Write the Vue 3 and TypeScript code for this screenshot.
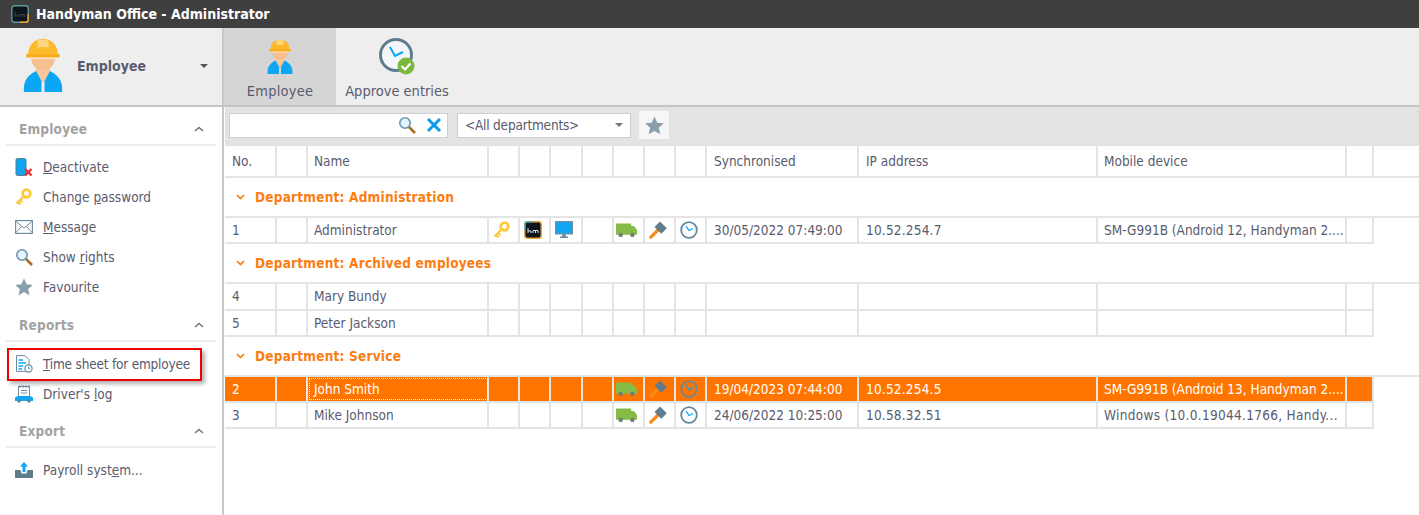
<script setup lang="ts">
type Item = { pre: string; key: string; post: string; icon: string; mark?: boolean }
type Section = { title: string; items: Item[] }
type Row = { no: string; name: string; icons: string[]; sync: string; ip: string; device: string; sel?: boolean; wide?: boolean }
type Group = { title: string; rows: Row[] }

const sections: Section[] = [
  {
    title: 'Employee',
    items: [
      { pre: '', key: 'D', post: 'eactivate', icon: 'deactivate' },
      { pre: 'Change ', key: 'p', post: 'assword', icon: 'key' },
      { pre: '', key: 'M', post: 'essage', icon: 'mail' },
      { pre: 'Show ', key: 'r', post: 'ights', icon: 'search' },
      { pre: 'Favourite', key: '', post: '', icon: 'star' },
    ],
  },
  {
    title: 'Reports',
    items: [
      { pre: '', key: 'T', post: 'ime sheet for employee', icon: 'sheet', mark: true },
      { pre: "Driver's ", key: 'l', post: 'og', icon: 'log' },
    ],
  },
  { title: 'Export', items: [{ pre: 'Payroll syst', key: 'e', post: 'm...', icon: 'upload' }] },
]

const headers = ['No.', '', 'Name', '', '', '', '', '', '', '', 'Synchronised', 'IP address', 'Mobile device', '']

const blank = ['', '', '', '', '', '', '']
const groups: Group[] = [
  {
    title: 'Department: Administration',
    rows: [
      {
        no: '1', name: 'Administrator', icons: ['key', 'hm', 'monitor', '', 'truck', 'hammer', 'clock'],
        sync: '30/05/2022 07:49:00', ip: '10.52.254.7', device: 'SM-G991B (Android 12, Handyman 2....',
      },
    ],
  },
  {
    title: 'Department: Archived employees',
    rows: [
      { no: '4', name: 'Mary Bundy', icons: blank, sync: '', ip: '', device: '' },
      { no: '5', name: 'Peter Jackson', icons: blank, sync: '', ip: '', device: '' },
    ],
  },
  {
    title: 'Department: Service',
    rows: [
      {
        no: '2', name: 'John Smith', icons: ['', '', '', '', 'truck', 'hammer', 'clock'],
        sync: '19/04/2023 07:44:00', ip: '10.52.254.5', device: 'SM-G991B (Android 13, Handyman 2....', sel: true,
      },
      {
        no: '3', name: 'Mike Johnson', icons: ['', '', '', '', 'truck', 'hammer', 'clock'],
        sync: '24/06/2022 10:25:00', ip: '10.58.32.51', device: 'Windows (10.0.19044.1766, Handy...', wide: true,
      },
    ],
  },
]
</script>

<template>
  <div class="app">
    <svg class="defs" aria-hidden="true">
      <defs>
        <symbol id="i-worker" viewBox="0 0 40 54">
          <path d="M13 30H27V35L20 45L13 35Z" fill="#f7c79b" />
          <path d="M1 54C0 45 3 38 13 33L18.5 43V54Z" fill="#0ba6f4" />
          <path d="M39 54C40 45 37 38 27 33L21.5 43V54Z" fill="#0ba6f4" />
          <path d="M8 18H32C32 27 27 32 20 32S8 27 8 18Z" fill="#f6c08e" />
          <path d="M5 18C5 7 11 1 20 1S35 7 35 18Z" fill="#fcb92b" />
          <path d="M14.5 2H25.5V10C23 8.5 17 8.5 14.5 10Z" fill="#fdd77f" />
          <rect x="3" y="16" width="34" height="3.5" rx="1.7" fill="#f9ae1f" />
          <rect x="7" y="19.5" width="26" height="1.6" fill="#fde3c4" />
        </symbol>
        <symbol id="i-approve" viewBox="0 0 38 38">
          <circle cx="18" cy="17" r="15.5" fill="#f4f7f9" stroke="#5d7d8d" stroke-width="3" />
          <path d="M12 9L17 18L25 14" fill="none" stroke="#0ba6f4" stroke-width="2" />
          <circle cx="28" cy="28" r="8.5" fill="#7cb83e" />
          <path d="M23.5 28L27 31.5L32.5 25.5" fill="none" stroke="#fff" stroke-width="2.2" />
        </symbol>
        <symbol id="i-deactivate" viewBox="0 0 18 18">
          <rect x="1" y=".5" width="10" height="17" rx="1.5" fill="#0ba6f4" stroke="#5d7d8d" stroke-width="1" />
          <path d="M10 11L16.5 17.5M16.5 11L10 17.5" stroke="#e8303a" stroke-width="2.4" />
        </symbol>
        <symbol id="i-key" viewBox="0 0 18 18">
          <path d="M1.5 15.5L8 9M3 14L5.5 16.5M5 12L7.3 14.3" stroke="#fdc83a" stroke-width="2.2" fill="none" />
          <circle cx="11.5" cy="5.5" r="3.8" fill="none" stroke="#fdc83a" stroke-width="2.8" />
        </symbol>
        <symbol id="i-mail" viewBox="0 0 18 14">
          <rect x=".6" y=".6" width="16.8" height="12.8" fill="#fff" stroke="#6f8e9d" stroke-width="1.2" />
          <path d="M1 1.5L9 8L17 1.5M1 12.5L6.5 6.5M17 12.5L11.5 6.5" fill="none" stroke="#6f8e9d" />
        </symbol>
        <symbol id="i-search" viewBox="0 0 18 18">
          <circle cx="7" cy="7" r="5.2" fill="#e4f4fc" stroke="#6e98ab" stroke-width="1.6" />
          <path d="M11 11L17 17" stroke="#b06a28" stroke-width="2.6" />
        </symbol>
        <symbol id="i-star" viewBox="0 0 18 18">
          <path d="M9 .5L11.6 6.3L17.8 6.9L13.1 11.1L14.5 17.4L9 14.1L3.5 17.4L4.9 11.1L.2 6.9L6.4 6.3Z" fill="#8a9fac" />
        </symbol>
        <symbol id="i-sheet" viewBox="0 0 18 18">
          <path d="M1.5 .6H10L14 4.6V16.4H1.5Z" fill="#fff" stroke="#6f8e9d" />
          <path d="M3.5 5H8M3.5 8H11M3.5 11H8M3.5 14H7" stroke="#0ba6f4" stroke-width="1.3" />
          <circle cx="13.5" cy="13.5" r="3.6" fill="#fff" stroke="#6f8e9d" stroke-width="1.2" />
          <path d="M13.5 11.5V13.5H15" fill="none" stroke="#0ba6f4" />
        </symbol>
        <symbol id="i-log" viewBox="0 0 18 18">
          <rect x="3.5" y="1.5" width="11" height="10" fill="#fff" stroke="#6f8e9d" />
          <path d="M5 0V3M8 0V3M11 0V3M14 0V3M6 5.5H12M6 8H12" stroke="#6f8e9d" />
          <path d="M0 16V12.5L3 11H15L18 12.5V16Z" fill="#0ba6f4" />
          <circle cx="4" cy="16" r="1.7" fill="#5d7d8d" />
          <circle cx="14" cy="16" r="1.7" fill="#5d7d8d" />
        </symbol>
        <symbol id="i-upload" viewBox="0 0 18 16">
          <path d="M9 0L13 4.5H10.5V10H7.5V4.5H5Z" fill="#0ba6f4" />
          <path d="M0 8H5.5L6.5 11.5H11.5L12.5 8H18V16H0Z" fill="#5d7d8d" />
        </symbol>
        <symbol id="i-logo" viewBox="0 0 18 18">
          <rect x=".8" y=".8" width="16.4" height="16.4" rx="2.5" fill="#10141f" stroke="#5a9a9a" stroke-width="1.4" />
          <path d="M17.2 9V14.7A2.5 2.5 0 0 1 14.7 17.2H9" fill="none" stroke="#e6a62c" stroke-width="1.4" />
          <path d="M4 7V12M4 10H7V12M9 12V9.5H14V12M11.5 9.5V12" fill="none" stroke="#3c4048" stroke-width="1" />
        </symbol>
        <symbol id="i-hm" viewBox="0 0 18 18">
          <rect x=".8" y=".8" width="16.4" height="16.4" rx="2.5" fill="#10141f" stroke="#e6a62c" stroke-width="1.4" />
          <path d="M.8 9V3.3A2.5 2.5 0 0 1 3.3 .8H9" fill="none" stroke="#5ab0b0" stroke-width="1.4" />
          <path d="M4 7V12M4 10H7V12M9 12V9.5H14V12M11.5 9.5V12" fill="none" stroke="#d8dde0" stroke-width="1" />
        </symbol>
        <symbol id="i-monitor" viewBox="0 0 18 18">
          <rect x=".6" y=".6" width="16.8" height="12.3" fill="#12a6f3" stroke="#6f8e9d" stroke-width="1.2" />
          <path d="M7.5 13H10.5L11 15.5H13V17H5V15.5H7Z" fill="#6f8e9d" />
        </symbol>
        <symbol id="i-truck" viewBox="0 0 18 13">
          <path d="M0 1H13V3H15.5L18 6.5V10.5H0Z" fill="#85bb47" />
          <circle cx="4" cy="10.7" r="1.9" fill="#6e7f77" />
          <circle cx="14" cy="10.7" r="1.9" fill="#6e7f77" />
        </symbol>
        <symbol id="i-hammer" viewBox="0 0 18 18">
          <path d="M1.8 16.2L10 8" stroke="#fb8a1d" stroke-width="3.2" stroke-linecap="round" />
          <path d="M5.5 6L11 .5L17.8 7.3L12.3 12.8Z" fill="#5f7d8d" />
        </symbol>
        <symbol id="i-clock" viewBox="0 0 18 18">
          <circle cx="9" cy="9" r="7.8" fill="#fff" stroke="#64899a" stroke-width="1.8" />
          <path d="M6 5L9 9.5L13 7.5" fill="none" stroke="#0ba6f4" stroke-width="1.3" />
        </symbol>
        <symbol id="i-clock-sel" viewBox="0 0 18 18">
          <circle cx="9" cy="9" r="7.8" fill="none" stroke="#64899a" stroke-width="1.8" />
          <path d="M6 5L9 9.5L13 7.5" fill="none" stroke="#0ba6f4" stroke-width="1.3" />
        </symbol>
      </defs>
    </svg>

    <header class="titlebar">
      <svg class="app-logo" width="18" height="18"><use href="#i-logo" /></svg>
      <span>Handyman Office - Administrator</span>
    </header>

    <div class="ribbon">
      <div class="module">
        <svg class="module-icon" width="40" height="54"><use href="#i-worker" /></svg>
        <span class="module-name">Employee</span>
        <span class="caret dark"></span>
      </div>
      <div class="tab active">
        <svg width="26" height="35"><use href="#i-worker" /></svg>
        <span>Employee</span>
      </div>
      <div class="tab">
        <svg width="38" height="38"><use href="#i-approve" /></svg>
        <span>Approve entries</span>
      </div>
    </div>

    <div class="main">
      <aside class="side">
        <section v-for="s in sections" :key="s.title" class="section">
          <div class="sec-head">
            <span>{{ s.title }}</span>
            <svg width="10" height="6" viewBox="0 0 10 6"><path d="M1 5L5 1.5L9 5" fill="none" stroke="#777" stroke-width="1.6" /></svg>
          </div>
          <div v-for="it in s.items" :key="it.icon" class="item">
            <svg class="item-icon" width="18" height="18"><use :href="'#i-' + it.icon" /></svg>
            <span :class="{ tight: it.mark }">{{ it.pre }}<u>{{ it.key }}</u>{{ it.post }}</span>
            <div v-if="it.mark" class="mark"></div>
          </div>
        </section>
      </aside>

      <div class="content">
        <div class="toolbar">
          <div class="search">
            <svg width="18" height="18"><use href="#i-search" /></svg>
            <svg width="16" height="16" viewBox="0 0 16 16"><path d="M2 2L14 14M14 2L2 14" stroke="#0b9ce8" stroke-width="3" /></svg>
          </div>
          <div class="combo">
            <span class="tight">&lt;All departments&gt;</span>
            <span class="caret"></span>
          </div>
          <div class="star-btn"><svg width="19" height="19"><use href="#i-star" /></svg></div>
        </div>

        <div class="head-wrap">
          <div class="grid head">
            <div v-for="(h, i) in headers" :key="i" class="cell" :class="{ name: i === 2, device: i === 12 }">{{ h }}</div>
          </div>
        </div>

        <template v-for="g in groups" :key="g.title">
          <div class="group">
            <svg width="9" height="6" viewBox="0 0 9 6"><path d="M1 1L4.5 4.5L8 1" fill="none" stroke="#fb7d12" stroke-width="1.7" /></svg>
            <span>{{ g.title }}</span>
          </div>
          <div v-for="r in g.rows" :key="r.no" class="grid row" :class="{ sel: r.sel }">
            <div class="cell">{{ r.no }}</div>
            <div class="cell"></div>
            <div class="cell name"><span>{{ r.name }}</span></div>
            <div v-for="(ic, i) in r.icons" :key="i" class="cell icon">
              <svg v-if="ic" :width="ic === 'truck' ? 21 : 18" height="18"><use :href="'#i-' + (ic === 'clock' && r.sel ? 'clock-sel' : ic)" /></svg>
            </div>
            <div class="cell">{{ r.sync }}</div>
            <div class="cell ip">{{ r.ip }}</div>
            <div class="cell device" :class="{ wide: r.wide }">{{ r.device }}</div>
            <div class="cell"></div>
          </div>
        </template>
      </div>
    </div>
  </div>
</template>

<style scoped>
.app {
  width: 1419px;
  height: 515px;
  overflow: hidden;
  background: #fff;
  font-family: "DejaVu Sans Condensed", "DejaVu Sans", sans-serif;
  font-size: 13.5px;
  color: #5a5b6e;
}
.defs { position: absolute; width: 0; height: 0; }
.titlebar {
  height: 28px;
  background: #3f3f3f;
  color: #fff;
  font-weight: 700;
  font-size: 14px;
  display: flex;
  align-items: center;
  gap: 7px;
  padding-left: 11px;
  box-sizing: border-box;
}
.ribbon {
  height: 79px;
  background: #eeeeee;
  border-bottom: 2px solid #c4c4c4;
  box-sizing: border-box;
  display: flex;
}
.module {
  width: 224px;
  box-sizing: border-box;
  border-right: 2px solid #c8c8c8;
  display: flex;
  align-items: center;
  padding: 0 14px 4px 23px;
}
.module-name { font-weight: 700; margin-left: 14px; flex: 1; font-size: 14px; margin-top: 2px; }
.tab {
  width: 112px;
  height: 77px;
  display: flex;
  flex-direction: column;
  align-items: center;
  justify-content: flex-end;
  font-size: 14.5px;
  padding-bottom: 6px;
  box-sizing: border-box;
  gap: 9px;
}
.tab.active { background: #d5d5d5; letter-spacing: .25px; }
.tab + .tab { width: 122px; gap: 7px; letter-spacing: 0; }
.caret {
  width: 0;
  height: 0;
  border: 4px solid transparent;
  border-top: 4px solid #777;
  border-bottom: 0;
}
.caret.dark { border-top-color: #555; margin-top: 3px; }
.main { display: flex; height: 408px; }
.side {
  width: 224px;
  box-sizing: border-box;
  border-right: 2px solid #c8c8c8;
  padding: 11px 0 0;
  flex: none;
}
.section { margin-bottom: 12px; }
.section:nth-child(2) { margin-bottom: 11px; }
.sec-head {
  margin: 0 6px 6px;
  height: 28px;
  box-sizing: border-box;
  padding: 0 12px 4px 13px;
  display: flex;
  align-items: center;
  justify-content: space-between;
  border-bottom: 2px solid #ececec;
  color: #a2a2a2;
  font-weight: 700;
  letter-spacing: .2px;
}
.section:nth-child(n+2) .sec-head { margin-bottom: 7px; }
.item {
  position: relative;
  height: 30px;
  display: flex;
  align-items: center;
  padding-left: 15px;
  gap: 10px;
}
.item-icon { flex: none; }
.tight { letter-spacing: -.2px; }
.mark {
  position: absolute;
  left: 7px;
  top: -1px;
  width: 195px;
  height: 33px;
  box-sizing: border-box;
  border: 2px solid #ee0000;
  box-shadow: 3px 3px 4px rgba(0, 0, 0, .3);
}
.content { flex: 1; min-width: 0; margin-left: 1px; }
.toolbar {
  height: 39px;
  background: #e3e3e3;
  display: flex;
  align-items: center;
  padding: 0 0 3px 4px;
  box-sizing: border-box;
}
.search {
  width: 219px;
  height: 25px;
  box-sizing: border-box;
  background: #fff;
  border: 1px solid #d0d0d0;
  display: flex;
  align-items: center;
  justify-content: flex-end;
  gap: 10px;
  padding-right: 5px;
}
.combo {
  width: 174px;
  height: 25px;
  margin-left: 9px;
  box-sizing: border-box;
  background: #fff;
  border: 1px solid #d0d0d0;
  display: flex;
  align-items: center;
  justify-content: space-between;
  padding: 0 7px;
}
.star-btn {
  width: 30px;
  height: 28px;
  margin-left: 8px;
  background: #f6f6f6;
  display: flex;
  align-items: center;
  justify-content: center;
}
.head-wrap { background: #fff; border-bottom: 2px solid #e4e4e4; }
.grid {
  width: 1149px;
  display: grid;
  grid-template-columns: 52px 31px 181px 31px 31px 32px 31px 31px 31px 31px 152px 239px 249px 27px;
  box-sizing: border-box;
}
.head { height: 30px; }
.row { height: 26.3px; border-bottom: 2px solid #e4e4e4; }
.cell {
  border-right: 2px solid #e4e4e4;
  padding-left: 7px;
  box-sizing: border-box;
  display: flex;
  align-items: center;
  white-space: nowrap;
  overflow: hidden;
}
.cell.name, .cell.device { padding-left: 6px; }
.cell.icon { padding: 0 4px 0 0; justify-content: center; }
.cell.ip { letter-spacing: .2px; }
.cell.wide { letter-spacing: .3px; }
.group {
  height: 40px;
  border-bottom: 2px solid #e4e4e4;
  box-sizing: border-box;
  display: flex;
  align-items: center;
  gap: 10px;
  padding: 0 0 0 11px;
  color: #fb7d12;
  font-weight: 700;
  letter-spacing: .22px;
}
.row.sel { background: #ff7500; color: #fff; }
.row.sel .name {
  position: relative;
  outline: 1px dotted #fff;
  outline-offset: -2px;
}
</style>

<style>
html, body { margin: 0; padding: 0; background: #fff; }
</style>
